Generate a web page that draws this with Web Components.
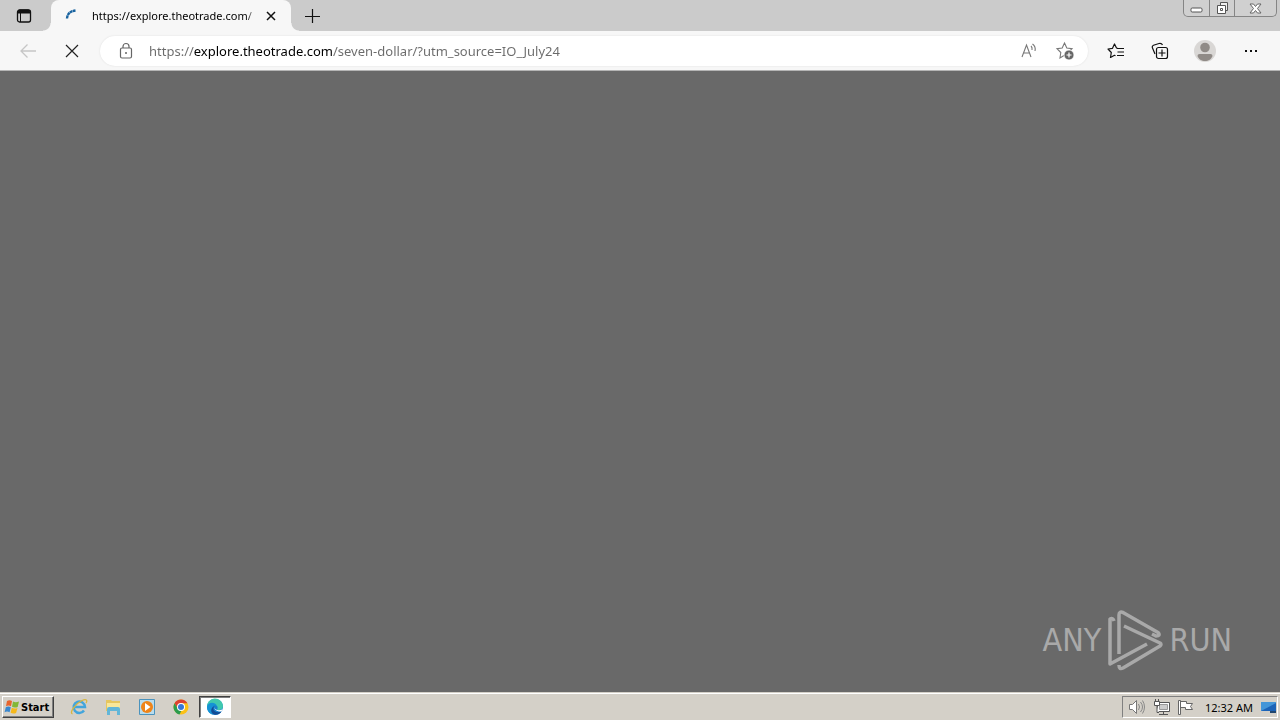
<!DOCTYPE html>
<html lang="en">
<head>
<meta charset="utf-8">
<title>Browser on desktop</title>
<style>
html, body { margin: 0; height: 100%; }
body { font-family: "Noto Sans", sans-serif; font-size: 12px; color: #000; overflow: hidden; }
</style>
</head>
<body>
<desktop-screen></desktop-screen>

<template id="desktop-screen">
<style>
:host { display: flex; flex-direction: column; height: 100vh; background: #696969; }
main { flex: 1; min-height: 0; display: flex; align-items: flex-end; justify-content: flex-end; padding: 0 48px 20px; box-sizing: border-box; }
</style>
<browser-tabs></browser-tabs>
<browser-toolbar></browser-toolbar>
<main><run-watermark></run-watermark></main>
<task-bar></task-bar>
</template>

<template id="browser-tabs">
<style>
:host { display: flex; height: 31px; background: #cbcbcb; position: relative; }
button { border: 0; padding: 0; background: none; display: grid; place-items: center; font: inherit; }
svg { display: block; }
.actions { width: 48px; height: 31px; }
.tab { position: relative; display: flex; align-items: center; width: 240px; margin-left: 3px; background: #f7f7f7; border-radius: 8px 8px 0 0; box-sizing: border-box; padding-left: 13px; }
.tab::before, .tab::after { content: ""; position: absolute; bottom: 0; width: 8px; height: 8px; }
.tab::before { left: -8px; background: radial-gradient(circle at 0 0, #cbcbcb 7px, #f7f7f7 8px); }
.tab::after { right: -8px; background: radial-gradient(circle at 100% 0, #cbcbcb 7px, #f7f7f7 8px); }
.title { margin-left: 12px; width: 167px; white-space: nowrap; font-size: 11px; line-height: 18px; background: linear-gradient(90deg, #000 154px, #aaa 162px); -webkit-background-clip: text; background-clip: text; color: transparent; }
.close { width: 24px; height: 24px; }
.new { width: 32px; height: 31px; margin-left: 5px; }
.window { position: absolute; right: 3px; top: 0; display: flex; height: 16px; border: 1px solid #858585; border-top: 0; border-radius: 0 0 5px 5px; background: #d0d0d0; }
.window button + button { border-left: 1px solid #858585; }
.min, .restore { width: 25px; }
.x { width: 42px; }
</style>
<button class="actions" aria-label="Tab actions"><svg width="16" height="16" viewBox="0 0 16 16"><rect x="1.500" y="2" width="13" height="12" rx="2" fill="none" stroke="#111" stroke-width="1.300"/><path d="M2 5V4a2 2 0 0 1 2-2h8a2 2 0 0 1 2 2v1z" fill="#111" stroke="#111"/><path d="M4.500 5v9" stroke="#111"/></svg></button>
<div class="tab">
<svg width="16" height="16" viewBox="0 0 16 16"><path d="M3 10.500Q3.500 3.500 11.500 2.500" fill="none" stroke="#17629f" stroke-width="2.400" stroke-dasharray="3 .4"/></svg>
<span class="title">https://explore.theotrade.com/</span>
<button class="close" aria-label="Close tab"><svg width="10" height="10" viewBox="0 0 10 10"><path d="m1 1 8 8M9 1 1 9" stroke="#111" stroke-width="1.500"/></svg></button>
</div>
<button class="new" aria-label="New tab"><svg width="16" height="16" viewBox="0 0 16 16"><path d="M8.500 1v14M1 8.500h15" stroke="#111" stroke-width="1.200"/></svg></button>
<div class="window">
<button class="min" aria-label="Minimize"><svg width="13" height="10" viewBox="0 0 13 10"><rect x="1" y="5" width="11" height="4" rx="1.200" fill="#fff" stroke="#555"/></svg></button>
<button class="restore" aria-label="Restore"><svg width="15" height="14" viewBox="0 0 15 14"><path d="M5.500 1.500h7v8h-7z" fill="#eee" stroke="#555"/><path d="M2.500 4.500h8v8h-8z" fill="#fff" stroke="#555"/><path d="M5.500 7.500h2v2h-2z" fill="none" stroke="#555"/></svg></button>
<button class="x" aria-label="Close window"><svg width="13" height="11" viewBox="0 0 13 11"><path d="M1 1h3.500l2 2.500L8.500 1H12L8.500 5.500 12 10H8.500l-2-2.500-2 2.500H1l3.500-4.500z" fill="#fff" stroke="#666"/></svg></button>
</div>
</template>

<template id="browser-toolbar">
<style>
:host { display: flex; align-items: center; height: 39px; background: #f7f7f7; border-bottom: 1px solid #b5b5b5; padding: 0 6px; }
button { border: 0; padding: 0; background: none; display: grid; place-items: center; width: 44px; height: 32px; }
svg { display: block; }
form { flex: 1; min-width: 0; display: flex; align-items: center; height: 30px; margin: 0 6px; padding: 0 5px 0 18px; background: #fff; border-radius: 15px; box-shadow: 0 0 2px #ddd; }
form button { width: 36px; height: 28px; }
input { flex: 1; min-width: 0; height: 28px; border: 0; padding: 0; margin-left: 15px; outline: 0; font: 13px "Noto Sans", sans-serif;
  background: linear-gradient(90deg, #6a6a6a 45px, #000 45px 184px, #6a6a6a 184px); -webkit-background-clip: text; background-clip: text; color: transparent; }
.wide { width: 46px; }
</style>
<button aria-label="Back" disabled><svg width="18" height="16" viewBox="0 0 18 16"><path d="M17 8H2M8.500 1.500 2 8l6.500 6.500" fill="none" stroke="#c6c6c6" stroke-width="1.300"/></svg></button>
<button aria-label="Stop loading"><svg width="14" height="14" viewBox="0 0 14 14"><path d="m1 1 12 12M13 1 1 13" stroke="#222" stroke-width="1.200"/></svg></button>
<form>
<svg width="16" height="18" viewBox="0 0 16 18"><rect x="2.500" y="6" width="11" height="10" rx="1.500" fill="none" stroke="#666" stroke-width="1.200"/><path d="M5 6V4.500a3 3 0 0 1 6 0V6" fill="none" stroke="#666" stroke-width="1.200"/><circle cx="8" cy="11" r="1" fill="#666"/></svg>
<input type="text" aria-label="Address" value="https://explore.theotrade.com/seven-dollar/?utm_source=IO_July24">
<button type="button" aria-label="Read aloud"><svg width="18" height="18" viewBox="0 0 18 18"><path d="m2 15 4.500-12L11 15M3.500 11h6M11 4q1.500 1.500 1 4M12.500 2q3.500 2.500 2.500 7" fill="none" stroke="#777" stroke-width="1.100"/></svg></button>
<button type="button" aria-label="Add to favorites"><svg width="20" height="20" viewBox="0 0 20 20"><path d="m9.500 2 2.300 5 5.200.7-3.800 3.800.8 5-4.500-2.300L5 17l.8-5.500L2 7.700 7.200 7z" fill="none" stroke="#777" stroke-width="1.100"/><circle cx="14" cy="14" r="5" fill="#666" stroke="#fff" stroke-width=".8"/><path d="M11.500 14h5M14 11.500v5" stroke="#fff" stroke-width="1.200"/></svg></button>
</form>
<button aria-label="Favorites"><svg width="18" height="18" viewBox="0 0 18 18"><path d="M11 6.500 9.500 6 7.500 2 5.500 6.300 1 7l3.300 3.500L3.500 15.500l4-2.200 1 .5" fill="none" stroke="#111" stroke-width="1.200" stroke-linejoin="round"/><path d="M10 6.500h7M10.500 10h6.500M10 13.500h7" stroke="#111" stroke-width="1.200"/></svg></button>
<button aria-label="Collections"><svg width="18" height="18" viewBox="0 0 18 18"><path d="M4 12 1.500 6q-.8-2 1-2.800L8 1.500q2.500-.6 3.500 1.500" fill="none" stroke="#111" stroke-width="1.200"/><rect x="5.500" y="5.500" width="11" height="11" rx="2" fill="#f7f7f7" stroke="#111" stroke-width="1.200"/><path d="M7.500 11h7M11 7.500v7" stroke="#111" stroke-width="1.200"/></svg></button>
<button class="wide" aria-label="Profile"><svg width="22" height="22" viewBox="0 0 22 22"><circle cx="11" cy="11" r="11" fill="#d9d7d5"/><circle cx="11" cy="7.500" r="4.800" fill="#908b87"/><path d="M3.500 16q0-2 2-2h11q2 0 2 2c-1 3-4 5-7.500 5s-6.500-2-7.500-5z" fill="#908b87"/></svg></button>
<button class="wide" aria-label="Menu"><svg width="14" height="4" viewBox="0 0 14 4"><path d="M1 1h2v2H1zM6 1h2v2H6zM11 1h2v2h-2z" fill="#111"/></svg></button>
</template>

<template id="run-watermark">
<style>
:host { display: flex; align-items: center; gap: 6px; height: 64px; color: #a9a9a9; font: 32px/64px "DejaVu Sans Condensed", sans-serif; }
svg { display: block; }
</style>
<span>ANY</span>
<svg width="56" height="64" viewBox="0 0 56 64" fill="none" stroke="#a9a9a9" stroke-width="3.500" stroke-linejoin="round"><path d="M7 13Q6 9.500 3 11V56L40 36"/><path d="M12 46V7q0-4 4-2.500L51 24.500Q54 28 49 28l-4-2"/><path d="m17 18 36 17q2 1.500 0 3L16 60q-4 2-4-3"/></svg>
<span>RUN</span>
</template>

<template id="task-bar">
<style>
:host { display: flex; align-items: center; height: 26px; background: #d4d0c8; border-top: 1px solid #d4d0c8; box-shadow: inset 0 1px #fff; padding: 1px 2px 0; font: 11px "Noto Sans", sans-serif; }
button { border: 0; padding: 0; background: none; display: grid; place-items: center; width: 34px; height: 22px; color: #000; }
.start { display: flex; align-items: center; gap: 1px; width: 52px; box-sizing: border-box; padding-left: 1px; border: 1px solid; border-color: #fff #404040 #404040 #fff; box-shadow: inset -1px -1px #808080; font: bold 11px "DejaVu Sans Condensed", sans-serif; }
.launch { display: flex; flex: 1; padding-left: 8px; }
.active { width: 32px; background: #fff; border: 1px solid; border-color: #404040 #fff #fff #404040; box-shadow: inset 1px 1px #808080; margin-left: 1px; box-sizing: border-box; }
.tray { display: flex; align-items: center; height: 20px; border: 1px solid; border-color: #808080 #fff #fff #808080; padding-left: 2px; }
.tray button { width: 24px; height: 20px; }
.tray .desktop { width: 17px; }
time { padding: 0 7px 0 8px; white-space: nowrap; }
svg { display: block; }
</style>
<button class="start"><svg width="16" height="16" viewBox="0 0 16 16"><path d="M3 2q2.500-1.500 5 0L7 7.200q-2.500-1.400-5 0z" fill="#e8642c"/><path d="M9 2.600q2.500 1.300 6 0L13.700 8q-3 1.200-5.700-.2z" fill="#83b735"/><path d="M1.800 8.200q2.500-1.400 5 0l-1.200 5q-2.600-1.400-5 0z" fill="#3987ce"/><path d="M7.800 8.800q2.700 1.300 5.700.2l-1.400 5q-3 1.300-5.500-.2z" fill="#f5b81b"/></svg>Start</button>
<nav class="launch">
<button aria-label="Internet Explorer"><svg width="18" height="18" viewBox="0 0 18 18"><path d="M14 12.500a5.700 5.700 0 1 1 1-3.500H5" fill="none" stroke="#42a5dc" stroke-width="2.500"/><path d="M2.500 16C-1 15 5 6 12 2.500c5-2.300 5.500.5 4 2.500" fill="none" stroke="#d8b63f" stroke-width="1.300"/></svg></button>
<button aria-label="Explorer"><svg width="18" height="18" viewBox="0 0 18 18"><path d="M2 2h5l1 1h8v10H2z" fill="#e6c65f"/><path d="M3 5h13v7H3z" fill="#f8e79a"/><path d="M3 17v-6q0-2 2-2h9q2 0 2 2v6h-3v-4H6v4z" fill="#62b6d8"/></svg></button>
<button aria-label="Media Player"><svg width="18" height="18" viewBox="0 0 18 18"><path d="M1.500 1.500h15v15h-15z" fill="#b9dced" stroke="#4b93bd"/><circle cx="9" cy="9" r="6" fill="#ef8419"/><path d="m7 5 5.500 4L7 13z" fill="#fff"/></svg></button>
<button aria-label="Chrome"><svg width="18" height="18" viewBox="0 0 18 18"><circle cx="9" cy="9" r="7.500" fill="#fbc116"/><path d="M2.500 5.200A7.500 7.500 0 0 1 15.500 5.300H9L6 11z" fill="#dc4132"/><path d="M2.500 5.200 6 11l3.500 1.500-2 3.900a7.500 7.500 0 0 1-5-11.200z" fill="#2c9c4e"/><circle cx="9" cy="9" r="4" fill="#fff"/><circle cx="9" cy="9" r="3" fill="#3777d8"/></svg></button>
<button class="active" aria-label="Edge"><svg width="18" height="18" viewBox="0 0 18 18"><circle cx="9" cy="9" r="8" fill="#1681cd"/><path d="M1 9a8 8 0 0 1 16-1c0 3-3 4.500-6 3.700 1.500-2 .4-4.700-2.500-4.700C5 7 2 7 1 9z" fill="#40c9ae"/><path d="M1 9c.5-5 8-6 10-1-4-3-7 3-3 8C4 17 1 13 1 9z" fill="#1593d5"/><path d="M8.500 8c-3 3 0 8 7 5.500-2 3-6 4.200-8.500 2.500-3-2.500-2-6.500 1.500-8z" fill="#134b94"/><path d="M8.500 8c-1 2 1 4 4 4.300 2 .2 3.500-.6 4.500-1.700l-1.500 2.900C11 14 7 11 8.500 8z" fill="#fff"/></svg></button>
</nav>
<div class="tray">
<button aria-label="Volume"><svg width="18" height="16" viewBox="0 0 18 16"><path d="M1.500 5.500h3l4-4v13l-4-4h-3z" fill="#fff" stroke="#777"/><path d="M10.500 5q2 3 0 6M12.500 3q4 5 0 10M14.500 1.500q4 6.500 0 13" fill="none" stroke="#888"/></svg></button>
<button aria-label="Network"><svg width="17" height="17" viewBox="0 0 17 17"><path d="M4.500 3.500h12v9h-12z" fill="#fff" stroke="#555"/><path d="M6.500 5.500h8v5h-8z" fill="#ccc" stroke="#999"/><path d="M6 15.500h9M10.500 13v2" stroke="#555"/><path d="M1.500 2.500h5v4h-5zM2.500 0v3M5.500 0v3M4 7v6.500h2" fill="#fff" stroke="#555"/></svg></button>
<button aria-label="Action center"><svg width="17" height="17" viewBox="0 0 17 17"><path d="M3.500 2.500h6v2h6l-2 3 2 3H8.500v-2h-5" fill="#fff" stroke="#666"/><path d="M1.500 1.500h2v14h-2z" fill="#fff" stroke="#666"/></svg></button>
<time>12:32 AM</time>
<button class="desktop" aria-label="Show desktop"><svg width="16" height="16" viewBox="0 0 16 16"><path d="M0 3h15v9H0z" fill="#1c63b7"/><path d="m0 12 15-8v-1H0z" fill="#4496d8"/><path d="M9 12h6v2H9z" fill="#20466f"/></svg></button>
</div>
</template>

<script>
for (const name of ["browser-tabs", "browser-toolbar", "run-watermark", "task-bar", "desktop-screen"]) {
  customElements.define(name, class extends HTMLElement {
    constructor() {
      super();
      this.attachShadow({ mode: "open" }).append(document.getElementById(name).content.cloneNode(true));
    }
  });
}
</script>
</body>
</html>
